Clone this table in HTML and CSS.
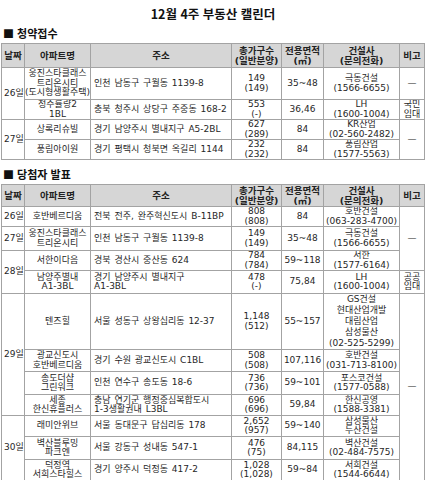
FILE: index.html
```html
<!DOCTYPE html>
<html lang="ko">
<head>
<meta charset="utf-8">
<title>12월 4주 부동산 캘린더</title>
<link rel="stylesheet" href="styles.css">
</head>
<body>
<div class="page">
  <h1 class="title">12월 4주 부동산 캘린더</h1>

  <h2 class="section">■ 청약접수</h2>
  <table class="cal">
    <colgroup>
      <col class="c-date"><col class="c-apt"><col class="c-addr"><col class="c-units"><col class="c-area"><col class="c-builder"><col class="c-note">
    </colgroup>
    <tr class="head h24">
      <th>날짜</th><th>아파트명</th><th>주소</th><th><span class="ln">총가구수</span><span class="ln">(일반분양)</span></th><th><span class="ln">전용면적</span><span class="ln">(㎡)</span></th><th><span class="ln">건설사</span><span class="ln">(문의전화)</span></th><th>비고</th>
    </tr>
    <tr class="h32">
      <td class="date" rowspan="2">26일</td>
      <td>웅진스타클래스<br>트리온시티<br>(도시형생활주택)</td>
      <td class="addr">인천 남동구 구월동 1139-8</td>
      <td>149<br>(149)</td>
      <td>35~48</td>
      <td>극동건설<br>(1566-6655)</td>
      <td>—</td>
    </tr>
    <tr class="h20">
      <td>청주률량2<br>1BL</td>
      <td class="addr">충북 청주시 상당구 주중동 168-2</td>
      <td>553<br>(-)</td>
      <td>36,46</td>
      <td>LH<br>(1600-1004)</td>
      <td>국민<br>임대</td>
    </tr>
    <tr class="h19">
      <td class="date" rowspan="2">27일</td>
      <td>상록리슈빌</td>
      <td class="addr">경기 남양주시 별내지구 A5-2BL</td>
      <td>627<br>(289)</td>
      <td>84</td>
      <td>KR산업<br>(02-560-2482)</td>
      <td rowspan="2">—</td>
    </tr>
    <tr class="h20">
      <td>풍림아이원</td>
      <td class="addr">경기 평택시 청북면 옥길리 1144</td>
      <td>232<br>(232)</td>
      <td>84</td>
      <td>풍림산업<br>(1577-5563)</td>
    </tr>
  </table>

  <h2 class="section second">■ 당첨자 발표</h2>
  <table class="cal">
    <colgroup>
      <col class="c-date"><col class="c-apt"><col class="c-addr"><col class="c-units"><col class="c-area"><col class="c-builder"><col class="c-note">
    </colgroup>
    <tr class="head h22">
      <th>날짜</th><th>아파트명</th><th>주소</th><th><span class="ln">총가구수</span><span class="ln">(일반분양)</span></th><th><span class="ln">전용면적</span><span class="ln">(㎡)</span></th><th><span class="ln">건설사</span><span class="ln">(문의전화)</span></th><th>비고</th>
    </tr>
    <tr class="h20">
      <td class="date">26일</td>
      <td>호반베르디움</td>
      <td class="addr">전북 전주, 완주혁신도시 B-11BP</td>
      <td>808<br>(808)</td>
      <td>84</td>
      <td>호반건설<br>(063-283-4700)</td>
      <td rowspan="3">—</td>
    </tr>
    <tr class="h24">
      <td class="date">27일</td>
      <td>웅진스타클래스<br>트리온시티</td>
      <td class="addr">인천 남동구 구월동 1139-8</td>
      <td>149<br>(149)</td>
      <td>35~48</td>
      <td>극동건설<br>(1566-6655)</td>
    </tr>
    <tr class="h20">
      <td class="date" rowspan="2">28일</td>
      <td>서한이다음</td>
      <td class="addr">경북 경산시 중산동 624</td>
      <td>784<br>(784)</td>
      <td>59~118</td>
      <td>서한<br>(1577-6164)</td>
    </tr>
    <tr class="h23">
      <td>남양주별내<br>A1-3BL</td>
      <td class="addr">경기 남양주시 별내지구<br>A1-3BL</td>
      <td>478<br>(-)</td>
      <td>75,84</td>
      <td>LH<br>(1600-1004)</td>
      <td>공공<br>임대</td>
    </tr>
    <tr class="h56">
      <td class="date" rowspan="4">29일</td>
      <td>텐즈힐</td>
      <td class="addr">서울 성동구 상왕십리동 12-37</td>
      <td>1,148<br>(512)</td>
      <td>55~157</td>
      <td class="tall">GS건설<br>현대산업개발<br>대림산업<br>삼성물산<br>(02-525-5299)</td>
      <td rowspan="7">—</td>
    </tr>
    <tr class="h22">
      <td>광교신도시<br>호반베르디움</td>
      <td class="addr">경기 수원 광교신도시 C1BL</td>
      <td>508<br>(508)</td>
      <td>107,116</td>
      <td>호반건설<br>(031-713-8100)</td>
    </tr>
    <tr class="h23">
      <td>송도더샵<br>그린워크</td>
      <td class="addr">인천 연수구 송도동 18-6</td>
      <td>736<br>(736)</td>
      <td>59~101</td>
      <td>포스코건설<br>(1577-0588)</td>
    </tr>
    <tr class="h21">
      <td>세종<br>한신휴플러스</td>
      <td class="addr">충남 연기군 행정중심복합도시<br>1-3생활권내 L3BL</td>
      <td>696<br>(696)</td>
      <td>59,84</td>
      <td>한신공영<br>(1588-3381)</td>
    </tr>
    <tr class="h21">
      <td class="date" rowspan="3">30일</td>
      <td>래미안위브</td>
      <td class="addr">서울 동대문구 답십리동 178</td>
      <td>2,652<br>(957)</td>
      <td>59~140</td>
      <td>삼성물산<br>두산건설</td>
    </tr>
    <tr class="h23">
      <td>벽산블루밍<br>파크엔</td>
      <td class="addr">서울 강동구 성내동 547-1</td>
      <td>476<br>(75)</td>
      <td>84,115</td>
      <td>벽산건설<br>(02-484-7575)</td>
    </tr>
    <tr class="h21">
      <td>덕정역<br>서희스타힐스</td>
      <td class="addr">경기 양주시 덕정동 417-2</td>
      <td>1,028<br>(1,028)</td>
      <td>59~84</td>
      <td>서희건설<br>(1544-6644)</td>
    </tr>
  </table>
</div>
</body>
</html>
```

FILE: styles.css
```css
html, body {
  margin: 0;
  padding: 0;
  background: #ffffff;
}

body {
  font-family: "Noto Sans CJK KR", "Noto Sans", sans-serif;
  color: #222222;
}

.page {
  width: 425px;
  padding-left: 1px;
  box-sizing: border-box;
}

.title {
  margin: 0;
  padding-top: 6px;
  height: 16px;
  line-height: 16px;
  font-size: 12.5px;
  font-weight: bold;
  text-align: center;
  color: #111111;
}

.section {
  margin: 4px 0 3px;
  padding-left: 2px;
  height: 14px;
  line-height: 14px;
  font-size: 11px;
  font-weight: bold;
  color: #111111;
}

.section.second {
  margin-top: 7px;
}

.cal {
  width: 423px;
  border-collapse: collapse;
  table-layout: fixed;
  font-family: "DejaVu Sans", "Noto Sans CJK KR", sans-serif;
  font-size: 9px;
  line-height: 9.5px;
  color: #262626;
}

.c-date { width: 23px; }
.c-apt { width: 66px; }
.c-addr { width: 141px; }
.c-units { width: 50px; }
.c-area { width: 42px; }
.c-builder { width: 76px; }
.c-note { width: 25px; }

.cal th,
.cal td {
  border: 1px solid #a3a3a3;
  padding: 0;
  text-align: center;
  vertical-align: middle;
  white-space: nowrap;
  overflow: hidden;
  line-height: 9.5px;
}

.cal td.tall {
  line-height: 11px;
}

.cal th {
  background: #d6d6d6;
  font-weight: bold;
  color: #222222;
  font-size: 9.5px;
}

.cal th .ln {
  display: block;
  height: 10px;
  line-height: 10px;
  overflow: visible;
}

.cal td.addr {
  text-align: left;
  padding-left: 3px;
  word-spacing: 1px;
}

.cal td.date {
  text-align: left;
  padding-left: 2px;
}

.h19 { height: 19px; }
.h20 { height: 20px; }
.h21 { height: 21px; }
.h22 { height: 22px; }
.h23 { height: 23px; }
.h24 { height: 24px; }
.h32 { height: 32px; }
.h56 { height: 56px; }
```
